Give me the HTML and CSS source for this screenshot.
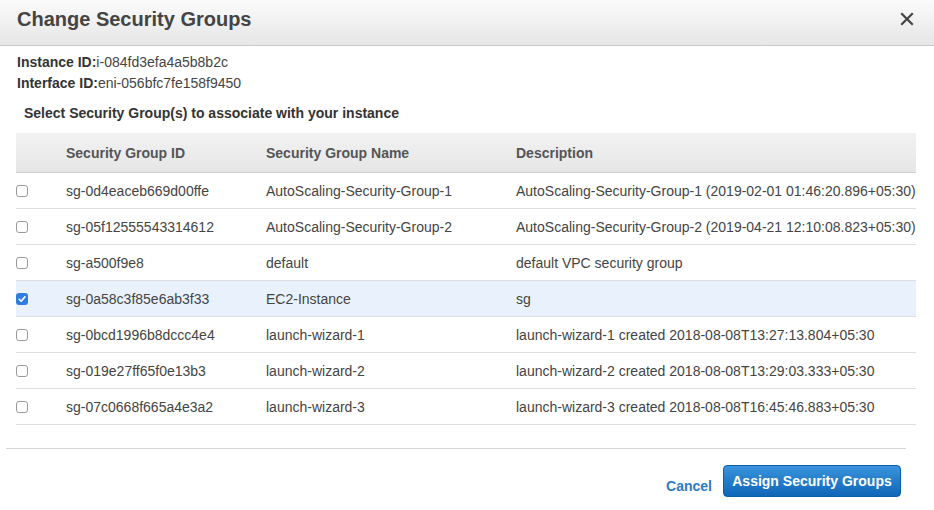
FILE: index.html
```html
<!DOCTYPE html>
<html>
<head>
<meta charset="utf-8">
<link rel="stylesheet" href="styles.css">
</head>
<body>
<div class="dialog">
  <div class="header">
    <h1 class="title">Change Security Groups</h1>
    <svg class="close" width="14" height="14" viewBox="0 0 14 14"><path d="M2 2 L12 12 M12 2 L2 12" stroke="#444" stroke-width="2.2" stroke-linecap="square"/></svg>
  </div>
  <div class="info">
    <div class="info-line"><b>Instance ID:</b>i-084fd3efa4a5b8b2c</div>
    <div class="info-line"><b>Interface ID:</b>eni-056bfc7fe158f9450</div>
  </div>
  <div class="prompt">Select Security Group(s) to associate with your instance</div>
  <div class="table">
    <div class="row head">
      <div class="c0"></div>
      <div class="c1">Security Group ID</div>
      <div class="c2">Security Group Name</div>
      <div class="c3">Description</div>
    </div>
    <div class="row">
      <div class="c0"><span class="cb"></span></div>
      <div class="c1">sg-0d4eaceb669d00ffe</div>
      <div class="c2">AutoScaling-Security-Group-1</div>
      <div class="c3">AutoScaling-Security-Group-1 (2019-02-01 01:46:20.896+05:30)</div>
    </div>
    <div class="row">
      <div class="c0"><span class="cb"></span></div>
      <div class="c1">sg-05f12555543314612</div>
      <div class="c2">AutoScaling-Security-Group-2</div>
      <div class="c3">AutoScaling-Security-Group-2 (2019-04-21 12:10:08.823+05:30)</div>
    </div>
    <div class="row">
      <div class="c0"><span class="cb"></span></div>
      <div class="c1">sg-a500f9e8</div>
      <div class="c2">default</div>
      <div class="c3">default VPC security group</div>
    </div>
    <div class="row selected">
      <div class="c0"><span class="cb checked"><svg width="12" height="12" viewBox="0 0 12 12"><path d="M3.2 6.3 L5.1 8.2 L8.9 3.9" fill="none" stroke="#fff" stroke-width="1.6" stroke-linecap="round" stroke-linejoin="round"/></svg></span></div>
      <div class="c1">sg-0a58c3f85e6ab3f33</div>
      <div class="c2">EC2-Instance</div>
      <div class="c3">sg</div>
    </div>
    <div class="row">
      <div class="c0"><span class="cb"></span></div>
      <div class="c1">sg-0bcd1996b8dccc4e4</div>
      <div class="c2">launch-wizard-1</div>
      <div class="c3">launch-wizard-1 created 2018-08-08T13:27:13.804+05:30</div>
    </div>
    <div class="row">
      <div class="c0"><span class="cb"></span></div>
      <div class="c1">sg-019e27ff65f0e13b3</div>
      <div class="c2">launch-wizard-2</div>
      <div class="c3">launch-wizard-2 created 2018-08-08T13:29:03.333+05:30</div>
    </div>
    <div class="row">
      <div class="c0"><span class="cb"></span></div>
      <div class="c1">sg-07c0668f665a4e3a2</div>
      <div class="c2">launch-wizard-3</div>
      <div class="c3">launch-wizard-3 created 2018-08-08T16:45:46.883+05:30</div>
    </div>
  </div>
  <div class="footer">
    <a class="cancel">Cancel</a>
    <button class="primary">Assign Security Groups</button>
  </div>
</div>
</body>
</html>
```

FILE: styles.css
```css
html, body {
  margin: 0;
  padding: 0;
  background: #fff;
}
body {
  font-family: "Liberation Sans", Arial, Helvetica, sans-serif;
  color: #444;
  font-size: 14px;
}
.dialog {
  width: 934px;
  height: 510px;
  overflow: hidden;
}
.header {
  height: 46px;
  box-sizing: border-box;
  border-bottom: 1px solid #c9c9c9;
  background: linear-gradient(#fbfbfb, #e6e6e6);
  display: flex;
  align-items: flex-start;
  justify-content: space-between;
  padding: 0 20px 0 17px;
}
.title {
  margin: 0;
  font-size: 20px;
  line-height: 38px;
  font-weight: bold;
  color: #444;
}
.close {
  margin-top: 12px;
}
.info {
  padding: 6px 0 0 17px;
}
.info-line {
  line-height: 21px;
  font-size: 14px;
}
.info-line b {
  color: #333;
}
.prompt {
  padding: 9px 0 0 24px;
  line-height: 21px;
  font-weight: bold;
  color: #333;
}
.table {
  margin: 9px 0 0 16px;
  width: 900px;
}
.row {
  display: flex;
  align-items: center;
  height: 36px;
  box-sizing: border-box;
  border-bottom: 1px solid #dedede;
  white-space: nowrap;
}
.row.head {
  height: 40px;
  background: linear-gradient(#f2f2f2, #e6e6e6);
  border-bottom: 1px solid #cfcfcf;
  font-weight: bold;
  color: #555;
}
.row.selected {
  background: #e9f2fc;
}
.c0 {
  width: 50px;
  display: flex;
  align-items: center;
}
.c1 { width: 200px; }
.c2 { width: 250px; }
.c3 { width: 400px; }
.cb {
  width: 12px;
  height: 12px;
  box-sizing: border-box;
  border: 1px solid #9a9a9a;
  border-radius: 3px;
  background: #fff;
  display: block;
  margin-top: 1px;
}
.cb.checked {
  border: none;
  background: #2f7ee0;
}
.cb svg { display: block; }
.footer {
  margin: 23px 28px 0 6px;
  border-top: 1px solid #d5d5d5;
  display: flex;
  justify-content: flex-end;
  align-items: center;
  padding-top: 16px;
  gap: 11px;
}
.cancel {
  color: #2b7bcb;
  font-weight: bold;
  font-size: 14px;
  margin-top: 10px;
}
.primary {
  margin-right: 5px;
  width: 178px;
  height: 32px;
  border: 1px solid #0d5ea8;
  border-radius: 4px;
  background: linear-gradient(#3a93dc, #0f66b7);
  color: #fff;
  font-family: "Liberation Sans", Arial, sans-serif;
  font-weight: bold;
  font-size: 14px;
  padding: 0;
}
```
